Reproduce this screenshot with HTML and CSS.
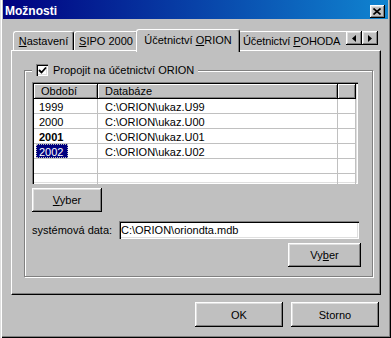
FILE: index.html
```html
<!DOCTYPE html>
<html>
<head>
  <title>Možnosti</title>
  <link rel="stylesheet" href="styles.css">
</head>
<body>
  <div class="window">
    <div class="titlebar">
      <span class="title">Možnosti</span>
      <button class="close">
        <svg width="8" height="7" viewBox="0 0 8 7"><path d="M0.5 0.5 L7.5 6.5 M7.5 0.5 L0.5 6.5" stroke="#000" stroke-width="1.6"/></svg>
      </button>
    </div>

    <div class="content">
      <div class="tabstrip">
        <div class="tabs">
          <div class="tab t1"><u>N</u>astavení</div>
          <div class="tab t2"><u>S</u>IPO 2000</div>
          <div class="tab active">Účetnictví <u>O</u>RION</div>
          <div class="tab t4">Účetnictví <u>P</u>OHODA</div>
        </div>
        <div class="scroller">
          <button class="arrow"><svg width="4" height="7" viewBox="0 0 4 7"><polygon points="4,0 0,3.5 4,7" fill="#000"/></svg></button>
          <button class="arrow"><svg width="4" height="7" viewBox="0 0 4 7"><polygon points="0,0 4,3.5 0,7" fill="#000"/></svg></button>
        </div>
      </div>

      <div class="panel">
        <fieldset class="group">
          <legend>
            <span class="check"><svg width="9" height="9" viewBox="0 0 9 9"><polyline points="1,4 3.5,6.5 8,1.5" fill="none" stroke="#000" stroke-width="1.8"/></svg></span>
            Propojit na účetnictví ORION
          </legend>

          <div class="grid">
            <div class="row head">
              <div class="cell c1">Období</div>
              <div class="cell c2">Databáze</div>
              <div class="cell c3"></div>
            </div>
            <div class="row">
              <div class="cell c1"><span>1999</span></div>
              <div class="cell c2">C:\ORION\ukaz.U99</div>
              <div class="cell c3"></div>
            </div>
            <div class="row">
              <div class="cell c1"><span>2000</span></div>
              <div class="cell c2">C:\ORION\ukaz.U00</div>
              <div class="cell c3"></div>
            </div>
            <div class="row">
              <div class="cell c1"><span class="bold">2001</span></div>
              <div class="cell c2">C:\ORION\ukaz.U01</div>
              <div class="cell c3"></div>
            </div>
            <div class="row">
              <div class="cell c1"><span class="selected">2002</span></div>
              <div class="cell c2">C:\ORION\ukaz.U02</div>
              <div class="cell c3"></div>
            </div>
            <div class="row">
              <div class="cell c1"></div>
              <div class="cell c2"></div>
              <div class="cell c3"></div>
            </div>
            <div class="row">
              <div class="cell c1"></div>
              <div class="cell c2"></div>
              <div class="cell c3"></div>
            </div>
          </div>

          <button class="btn pick"><u>V</u>yber</button>

          <div class="datarow">
            <label class="datalabel">systémová data:</label>
            <div class="field">C:\ORION\oriondta.mdb</div>
          </div>

          <button class="btn pick pick-right">Vy<u>b</u>er</button>
        </fieldset>
      </div>

      <div class="footer">
        <button class="btn wide">OK</button>
        <button class="btn wide">Storno</button>
      </div>
    </div>
  </div>
</body>
</html>
```

FILE: styles.css
```css
* {
  box-sizing: border-box;
}

body {
  margin: 0;
  background-color: #c0c0c0;
  font-family: "Liberation Sans", Arial, sans-serif;
  font-size: 11px;
  color: #000;
}

.window {
  width: 391px;
  height: 338px;
  padding: 0 2px 2px 2px;
  background-color: #c0c0c0;
  box-shadow: inset 1px 0 #dfdfdf, inset 2px 0 #fff, inset -1px -1px #000, inset -2px -2px #808080;
}

/* title bar */
.titlebar {
  height: 19px;
  margin: 0 1px;
  padding: 0 3px 1px 2px;
  display: flex;
  align-items: flex-end;
  justify-content: space-between;
  background: linear-gradient(90deg, #000080, #1084d0);
  color: #fff;
}

.title {
  font-size: 12px;
  font-weight: bold;
  line-height: 13px;
}

.close {
  width: 15px;
  height: 13px;
  padding: 0 1px 1px 0;
  border: none;
  background-color: #c0c0c0;
  box-shadow: inset -1px -1px #000, inset 1px 1px #fff, inset -2px -2px #808080, inset 2px 2px #dfdfdf;
  display: flex;
  align-items: center;
  justify-content: center;
}

.content {
  padding: 10px 8px 0 9px;
}

/* tabs */
.tabstrip {
  display: flex;
  height: 23px;
  margin-bottom: -2px;
  position: relative;
  z-index: 1;
}

.tabs {
  flex: 1;
  display: flex;
  align-items: flex-start;
  overflow: hidden;
  padding-left: 2px;
}

.tab {
  flex: none;
  height: 19px;
  margin-top: 2px;
  padding-top: 1px;
  line-height: 16px;
  text-align: center;
  white-space: nowrap;
  border: 1px solid;
  border-color: #fff #000 transparent #fff;
  border-bottom: none;
  border-radius: 3px 3px 0 0;
  box-shadow: inset -1px 0 #808080;
  background-color: #c0c0c0;
}

.t1 { width: 61px; }
.t2 { width: 64px; }
.t4 { width: 120px; text-align: left; padding-left: 4px; letter-spacing: -0.1px; }

.tab.active {
  width: 104px;
  height: 23px;
  margin: 0 -2px;
  padding-top: 2px;
  position: relative;
  z-index: 1;
}

.scroller {
  display: flex;
  margin-top: 2px;
  margin-right: 3px;
}

.arrow {
  width: 16px;
  height: 14px;
  padding: 0;
  border: none;
  background-color: #c0c0c0;
  box-shadow: inset -1px -1px #000, inset 1px 1px #fff, inset -2px -2px #808080, inset 2px 2px #dfdfdf;
  display: flex;
  align-items: center;
  justify-content: center;
}

/* tab page */
.panel {
  height: 245px;
  border-top: 1px solid #fff;
  border-left: 1px solid #fff;
  border-right: 1px solid #000;
  border-bottom: 1px solid #000;
  box-shadow: inset -1px -1px #808080;
  overflow: hidden;
}

.group {
  margin: 12px 7px 0 12px;
  padding: 5px 11px 9px 7px;
  border: 1px solid #808080;
  box-shadow: 1px 1px #fff, inset 1px 1px #fff;
  min-width: 0;
}

.group legend {
  display: flex;
  align-items: center;
  gap: 5px;
  padding: 0 4px;
  line-height: 14px;
  background-color: #c0c0c0;
}

.check {
  width: 12px;
  height: 12px;
  background-color: #fff;
  box-shadow: inset 1px 1px #808080, inset 2px 2px #000, inset -1px -1px #fff, inset -2px -2px #dfdfdf;
  display: flex;
  align-items: center;
  justify-content: center;
  padding: 1px 0 0 1px;
}

/* list */
.grid {
  width: 326px;
  height: 102px;
  padding: 2px;
  background-color: #fff;
  box-shadow: inset 1px 1px #808080, inset 2px 2px #000, inset -1px -1px #fff, inset -2px -2px #dfdfdf;
  overflow: hidden;
}

.row {
  display: flex;
  height: 15px;
}

.cell {
  flex: none;
  height: 15px;
  border-right: 1px solid #c0c0c0;
  border-bottom: 1px solid #c0c0c0;
  white-space: nowrap;
  overflow: hidden;
}

.c1 { width: 64px; padding-left: 2px; }
.c2 { width: 240px; padding: 3px 0 0 7px; line-height: 11px; }
.c3 { width: 18px; }

.c1 span {
  display: inline-block;
  height: 14px;
  padding: 3px 5px 0 3px;
  line-height: 11px;
}

.head .cell {
  height: 15px;
  padding: 1px 0 0 7px;
  line-height: 12px;
  background-color: #c0c0c0;
  border-color: #000;
  box-shadow: inset 1px 1px #fff, inset -1px -1px #808080;
}

.bold {
  font-weight: bold;
}

.selected {
  background-color: #000080;
  color: #fff;
  outline: 1px dotted #c0c0c0;
  outline-offset: -1px;
}

/* buttons and fields */
.btn {
  display: block;
  padding: 0;
  border: none;
  font: inherit;
  color: #000;
  background-color: #c0c0c0;
  box-shadow: inset -1px -1px #000, inset 1px 1px #fff, inset -2px -2px #808080, inset 2px 2px #dfdfdf;
}

.pick {
  width: 70px;
  height: 24px;
  margin-top: 4px;
}

.pick-right {
  width: 73px;
  margin-left: auto;
}

.datarow {
  display: flex;
  align-items: center;
  margin-top: 9px;
}

.datalabel {
  width: 87px;
  line-height: 18px;
}

.field {
  width: 240px;
  height: 18px;
  padding-left: 2px;
  line-height: 18px;
  background-color: #fff;
  box-shadow: inset 1px 1px #808080, inset 2px 2px #000, inset -1px -1px #fff, inset -2px -2px #dfdfdf;
}

.footer {
  display: flex;
  justify-content: flex-end;
  gap: 8px;
  margin-top: 7px;
  padding-right: 2px;
}

.wide {
  width: 88px;
  height: 25px;
}
```
